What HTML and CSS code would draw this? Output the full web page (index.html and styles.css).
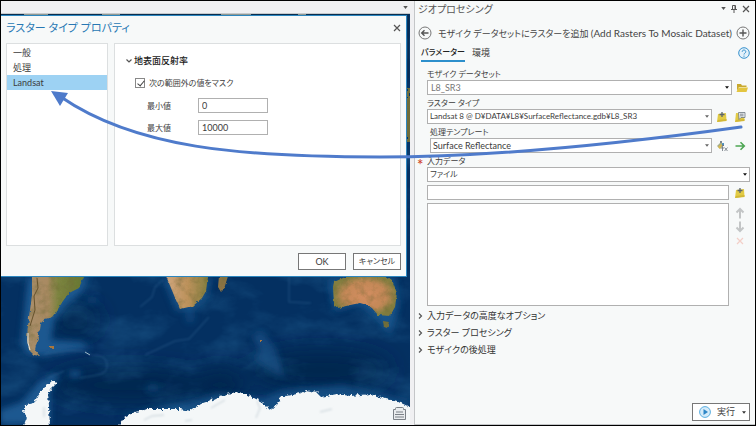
FILE: index.html
```html
<!DOCTYPE html>
<html lang="ja">
<head>
<meta charset="utf-8">
<title>ジオプロセシング</title>
<link rel="stylesheet" href="styles.css">
</head>
<body>
<div class="app">
  <main class="view">
    <div class="view-tabs">
      <svg class="caret" viewBox="0 0 6 4" aria-hidden="true"><path d="M0 0h6L3 4z"/></svg>
    </div>
    <div class="stage">
      <svg class="map" viewBox="1 14 409 411" preserveAspectRatio="xMidYMax slice" aria-hidden="true">
        <defs>
          <filter id="soft" x="-30%" y="-30%" width="160%" height="160%"><feGaussianBlur stdDeviation="3"/></filter>
          <filter id="line-soft" x="-10%" y="-10%" width="120%" height="120%"><feGaussianBlur stdDeviation=".8"/></filter>
          <filter id="haze" x="-40%" y="-40%" width="180%" height="180%"><feGaussianBlur stdDeviation="10"/></filter>
          <filter id="rough" x="-5%" y="-5%" width="110%" height="110%">
            <feTurbulence type="fractalNoise" baseFrequency="0.25" numOctaves="3" seed="4" result="n"/>
            <feDisplacementMap in="SourceGraphic" in2="n" scale="3" xChannelSelector="R" yChannelSelector="G" result="d"/>
            <feTurbulence type="fractalNoise" baseFrequency="0.12" numOctaves="4" seed="8"/>
            <feColorMatrix values="0 0 0 0 .16  0 0 0 0 .15  0 0 0 0 .04  1.2 0 0 0 -.5"  result="t"/>
            <feComposite in="t" in2="d" operator="in" result="s"/>
            <feMerge><feMergeNode in="d"/><feMergeNode in="s"/></feMerge>
          </filter>
          <filter id="ice" x="-5%" y="-20%" width="110%" height="140%">
            <feTurbulence type="fractalNoise" baseFrequency="0.3" numOctaves="3" seed="2" result="n"/>
            <feDisplacementMap in="SourceGraphic" in2="n" scale="5" xChannelSelector="R" yChannelSelector="G"/>
          </filter>
          <filter id="sea" x="0" y="0" width="100%" height="100%">
            <feTurbulence type="fractalNoise" baseFrequency="0.02 0.035" numOctaves="5" seed="11"/>
            <feColorMatrix values="0 0 0 0 .06  0 0 0 0 .32  0 0 0 0 .6  2 0 0 0 -.9"/>
          </filter>
          <linearGradient id="sa" x1="0" x2="1" y1="0" y2="0"><stop offset="0" stop-color="#a88e6a"/><stop offset=".35" stop-color="#a98a62"/><stop offset=".55" stop-color="#7c8440"/><stop offset="1" stop-color="#667632"/></linearGradient>
          <linearGradient id="af" x1="0" x2="1" y1="0" y2="0"><stop offset="0" stop-color="#cfa67e"/><stop offset=".5" stop-color="#bd925c"/><stop offset="1" stop-color="#847e40"/></linearGradient>
          <radialGradient id="au"><stop offset="0" stop-color="#d38e60"/><stop offset=".65" stop-color="#c48858"/><stop offset="1" stop-color="#837e40"/></radialGradient>
        </defs>
        <rect x="1" y="14" width="409" height="411" fill="#043061"/>
        <g fill="#02264f" filter="url(#haze)">
          <ellipse cx="75" cy="320" rx="25" ry="16"/><ellipse cx="130" cy="385" rx="80" ry="18"/>
          <ellipse cx="320" cy="370" rx="70" ry="20"/><ellipse cx="220" cy="385" rx="25" ry="18"/>
        </g>
        <rect x="1" y="14" width="409" height="411" filter="url(#sea)" opacity=".25"/>
        <g fill="#1a5890" filter="url(#soft)">
          <path d="M28 277h60l-7 16-15 12-12 16-3 19 30 2 10 6-48 8-16-2-6-12z"/>
          <path d="M0 424v-14l22-8 18-22 20-7-10 18v33z"/>
          <path d="M162 277h50l-4 20-16 14-16 0z" opacity=".7"/>
          <path d="M328 280l20-3h48l3 30-9 28-14-18-16-12-26 6z" opacity=".8"/>
          <path d="M118 416l70-14 30-9 45 5 20-8 60-5 66 16v15z" opacity=".7"/>
          <path d="M252 335l10-4 14 18 8 28-14-8-18-11 8-5z" opacity=".6"/>
          <ellipse cx="75" cy="374" rx="6" ry="3"/><ellipse cx="92" cy="300" rx="7" ry="2" opacity=".6"/>
          <ellipse cx="153" cy="388" rx="6" ry="4" opacity=".5"/><ellipse cx="190" cy="317" rx="5" ry="6" opacity=".5"/>
        </g>
        <g fill="none" stroke="#4b80ad" stroke-width="1.500" opacity=".28" filter="url(#line-soft)">
          <path d="M44 354q20-5 38-3l10 4q14 0 15 9t-9 11l-18 3M48 378l16-7M140 307l12-10 3-10 8-7M145 355l30-14 14-2 20-22M289 277v25l22 1"/>
        </g>
        <path d="M85 352l5 3" stroke="#9eb8c6" stroke-width="1"/>
        <g filter="url(#rough)">
          <path fill="url(#sa)" d="M32 276h52l-5 12-10 5-6 8-5 8-6 8-7 2-4 4-1 7-3 3 2 5-3 7-1 5 5 6-6-1-5-5-2-10 1-15 2-15 2-15z"/>
          <path fill="url(#af)" d="M166 276h42l-2 15-4 7-9 8-13 3-4-9-5-12z"/>
          <path fill="#8b7344" d="M219 276h9l-4 13-3 3-3-5z"/>
          <path fill="url(#au)" d="M333 287l1-5 9-4 8-3h34l7 5 5 13-2 14-5 9-12-1-6-7-5-3-7-2-10 2-12 3-4-3z"/>
          <path fill="#706d3a" d="M383 321l6 1-2 6-3-1zM407 88h3v54h-3z"/>
          <path fill="#ad7841" d="M49 346h4v2h-4zM260 340h2v2h-2z"/>
        </g>
        <path d="M37 278l1 10-4 8 1 14-5 16" fill="none" stroke="#66522c" stroke-width="1"/>
        <path d="M28 333v10l2 7" fill="none" stroke="#e4e2da" stroke-width="1"/>
        <g fill="#f4f7f8" filter="url(#ice)">
          <path d="M117 428l8-11 10-5 12-3h33l10 2 10-7 12-4 8-4 15-4 15 4 12 6 8 8 6-4 5-9 20-4 5-3 10 2 5 5 15-3 15 2 20-2 15 5 15 4 15 7v22z"/>
          <path d="M23 428l4-10-4-6 3-7 8-2 4-8 6-8 8-5h5l-7 7-2 6 1 11 1 22z"/>
        </g>
        <g fill="none" stroke="#c3ced5" stroke-width="1" filter="url(#line-soft)">
          <path d="M144 420l8-4 12-1M185 421l7-1M257 401l3 7-4 10M44 407v10M225 400l-14 8M320 412l12-3"/>
        </g>
        <path d="M1 14.500h406M408.500 14v64" stroke="#082d50"/>
        <path d="M24 14.500h24M102 14.500h18M221 14.500h30M298 14.500h8" stroke="#8d9792"/>
      </svg>

      <section class="dialog" aria-labelledby="dlg-title">
        <header class="dialog-head">
          <h1 id="dlg-title">ラスター タイプ プロパティ</h1>
          <button class="plain" type="button" aria-label="閉じる"><svg class="close" viewBox="0 0 8 8"><path d="M1 1l6 6M7 1L1 7"/></svg></button>
        </header>
        <div class="dialog-body">
          <nav class="pages">
            <a href="#general">一般</a>
            <a href="#process">処理</a>
            <a href="#landsat" class="current">Landsat</a>
          </nav>
          <div class="page">
            <h2><svg class="chev" viewBox="0 0 6 6" aria-hidden="true"><path d="M.5 1.500L3 4l2.500-2.500"/></svg>地表面反射率</h2>
            <label class="check"><input type="checkbox" checked><span>次の範囲外の値をマスク</span></label>
            <div class="pair"><label for="min">最小値</label><input id="min" type="text" value="0"></div>
            <div class="pair"><label for="max">最大値</label><input id="max" type="text" value="10000"></div>
          </div>
        </div>
        <footer class="dialog-foot">
          <button type="button">OK</button>
          <button type="button" class="kana">キャンセル</button>
        </footer>
      </section>
      <svg class="note" viewBox="0 0 15 13" aria-hidden="true"><path d="M3.500 1.500q0-1 1-1h6q1 0 1 1v1h2v10h-12v-10h2zM4 5h7M3 7.500h9M3 10h9"/></svg>
    </div>
  </main>

  <aside class="pane">
    <header class="pane-head">
      <h1>ジオプロセシング</h1>
      <button class="plain" type="button" aria-label="メニュー"><svg class="caret" viewBox="0 0 6 4"><path d="M0 0h6L3 4z"/></svg></button>
      <button class="plain" type="button" aria-label="固定"><svg class="pin" viewBox="0 0 6 8"><path d="M1.500 .5h3v4M1.500 .5v4M0 4.500h6M3 5v3M4 1v3"/></svg></button>
      <button class="plain" type="button" aria-label="閉じる"><svg class="close" viewBox="0 0 8 8"><path d="M1 1l6 6M7 1L1 7"/></svg></button>
    </header>
    <div class="tool-head">
      <button class="plain" type="button" aria-label="戻る"><svg class="round" viewBox="0 0 14 14"><circle cx="7" cy="7" r="6"/><path class="bold" d="M10.500 7H4M6.500 4.200L3.700 7l2.800 2.800"/></svg></button>
      <h2>モザイク データセットにラスターを追加 <span class="latin">(Add Rasters To Mosaic Dataset)</span></h2>
      <button class="plain" type="button" aria-label="追加"><svg class="round" viewBox="0 0 14 14"><circle cx="7" cy="7" r="6"/><path class="bold" d="M3.500 7h7M7 3.500v7"/></svg></button>
    </div>
    <nav class="tabs">
      <a href="#params" class="current">パラメーター</a>
      <a href="#env">環境</a>
      <button class="plain help" type="button" aria-label="ヘルプ"><svg viewBox="0 0 12 12"><circle cx="6" cy="6" r="5.300"/><path d="M4.200 4.800c0-2.400 3.600-2.300 3.600 0 0 1.300-1.800 1.300-1.800 2.700M6 8.600v1.200"/></svg></button>
    </nav>

    <form class="form">
      <label for="mosaic">モザイク データセット</label>
      <div class="row">
        <div class="combo dark"><select id="mosaic" class="muted"><option>L8_SR3</option></select><svg class="tri" viewBox="0 0 5 3" aria-hidden="true"><path d="M0 0h5L2.500 3z"/></svg></div>
        <button class="plain browse" type="button" aria-label="参照"><svg class="folder" viewBox="0 0 12 10"><path fill="#c9a92f" d="M1 1h4l1 1.500h4.500V4H3L1 8z"/><path fill="#e3c540" d="M2.500 4.500H12L10.500 9H.5z"/></svg></button>
      </div>
      <label for="rtype">ラスター タイプ</label>
      <div class="row">
        <div class="combo"><select id="rtype" class="small"><option>Landsat 8 @ D¥DATA¥L8¥SurfaceReflectance.gdb¥L8_SR3</option></select><svg class="tri" viewBox="0 0 5 3" aria-hidden="true"><path d="M0 0h5L2.500 3z"/></svg></div>
        <div class="icons">
          <button class="plain" type="button" aria-label="インポート"><svg class="icon" viewBox="0 0 12 12"><path fill="#e2cb45" d="M2 3l8-1 .5 7.500L1 11z"/><path fill="#d2b836" d="M1 11l1-2 8.500-1v2z"/><path stroke="#5a646e" stroke-width="1.300" d="M6 1v5M3.500 3.500h5"/></svg></button>
          <button class="plain" type="button" aria-label="プロパティ"><svg class="icon" viewBox="0 0 12 12"><path fill="#e2cb45" d="M2 2l8 .5.500 7L1 11z"/><path fill="#d2b836" d="M1 11l1-2 8.500-1v2z"/><path fill="#e9edf0" stroke="#6d7780" stroke-width=".8" d="M4.500 1.500h6.500v5H7L5 8.500z"/><path stroke="#6d7780" stroke-width=".8" d="M6 3.200h3.500M6 4.800h3.500"/></svg></button>
        </div>
      </div>
      <label class="nested" for="tmpl">処理テンプレート</label>
      <div class="row nested-row">
        <div class="combo"><select id="tmpl"><option>Surface Reflectance</option></select><svg class="tri" viewBox="0 0 5 3" aria-hidden="true"><path d="M0 0h5L2.500 3z"/></svg></div>
        <div class="icons">
          <button class="plain" type="button" aria-label="編集"><svg class="icon" viewBox="0 0 12 12"><path fill="#a3ac8a" d="M1 6l4-4 3 3-4 4z"/><path fill="#dbb94a" d="M2 7l3-3 1 1-2 4z"/><path fill="#7d8791" d="M4 1h2v2H4zM6 4l2-1v3H6z"/><circle cx="7" cy="4" r="1" fill="#3f8fc7"/><path fill="none" stroke="#69727b" stroke-width=".8" d="M8 5.500q-1.500-.5-1.500 1V11M5 8h3M8.500 7.500l3 3.500M11.500 7.500l-3 3.500"/></svg></button>
          <button class="plain" type="button" aria-label="実行先"><svg class="icon" viewBox="0 0 12 12"><path fill="none" stroke="#4da653" stroke-width="1.600" d="M1.500 6H10M6.500 2.200L10.300 6 6.500 9.800"/></svg></button>
        </div>
      </div>
      <label class="required" for="input">入力データ</label>
      <div class="row">
        <div class="combo dark"><select id="input" class="small"><option>ファイル</option></select><svg class="tri" viewBox="0 0 5 3" aria-hidden="true"><path d="M0 0h5L2.500 3z"/></svg></div>
      </div>
      <div class="row entry">
        <input class="path" type="text" aria-label="入力ファイル">
        <div class="icons"><button class="plain" type="button" aria-label="ファイル追加"><svg class="icon" viewBox="0 0 12 12"><path fill="#e2cb45" d="M2 3l8-1 .5 7.500L1 11z"/><path fill="#d2b836" d="M1 11l1-2 8.500-1v2z"/><path stroke="#5a646e" stroke-width="1.300" d="M6 1v5M3.500 3.500h5"/></svg></button></div>
      </div>
      <div class="row entry list">
        <textarea aria-label="入力リスト"></textarea>
        <div class="icons column">
          <button class="plain" type="button" aria-label="上へ"><svg class="icon grey" viewBox="0 0 12 12"><path d="M6 11.500V2M2.500 5.500L6 2l3.500 3.500"/></svg></button>
          <button class="plain" type="button" aria-label="下へ"><svg class="icon grey" viewBox="0 0 12 12"><path d="M6 .5V10M2.500 6.500L6 10l3.500-3.500"/></svg></button>
          <button class="plain" type="button" aria-label="削除"><svg class="icon pink" viewBox="0 0 12 12"><path d="M3 3l6 6M9 3L3 9"/></svg></button>
        </div>
      </div>
      <div class="groups">
        <button type="button"><svg class="chev" viewBox="0 0 6 6" aria-hidden="true"><path d="M2 .5L4.500 3 2 5.500"/></svg>入力データの高度なオプション</button>
        <button type="button"><svg class="chev" viewBox="0 0 6 6" aria-hidden="true"><path d="M2 .5L4.500 3 2 5.500"/></svg>ラスター プロセシング</button>
        <button type="button"><svg class="chev" viewBox="0 0 6 6" aria-hidden="true"><path d="M2 .5L4.500 3 2 5.500"/></svg>モザイクの後処理</button>
      </div>
    </form>
    <footer class="run-bar">
      <button class="run" type="button"><svg class="play" viewBox="0 0 12 12" aria-hidden="true"><circle cx="6" cy="6" r="5.400"/><path d="M4.500 3L9 6 4.500 9z"/></svg><span>実行</span><svg class="tri" viewBox="0 0 5 3" aria-hidden="true"><path d="M0 0h5L2.500 3z"/></svg></button>
    </footer>
  </aside>

  <svg class="callout" viewBox="0 0 756 426" preserveAspectRatio="none" aria-hidden="true">
    <path class="line" d="M741 127C640 141 500 157 380 157 240 157 135 148 61 97"/>
    <path class="head" d="M51 91l17 2-8 13z"/>
  </svg>
</div>
</body>
</html>
```

FILE: styles.css
```css
* { box-sizing: border-box; }

body {
  margin: 0;
  color: #3c3c3c;
  font-family: Lato, "Noto Sans CJK JP", sans-serif;
  font-size: 9px;
  line-height: 12px;
  font-feature-settings: "palt";
}

h1, h2 { margin: 0; font-size: 9px; font-weight: 400; }
a { color: inherit; text-decoration: none; }
button, input, select, textarea { font: inherit; font-feature-settings: inherit; color: inherit; margin: 0; }
svg { display: block; flex: none; }

.plain { display: flex; padding: 0; border: 0; background: none; }

.app {
  position: relative;
  display: grid;
  grid-template-columns: minmax(0, 413fr) minmax(0, 341fr);
  min-height: 100vh;
  border: 1px solid #000;
  background: #f0f0f2;
}

/* Map view */
.view { display: flex; flex-direction: column; min-width: 0; padding-right: 4px; }
.view-tabs { display: flex; justify-content: flex-end; align-items: center; height: 13px; padding-right: 2px; border-bottom: 1px solid #c8cacc; }
.caret { width: 5px; height: 3px; fill: #555; }
.close { width: 8px; height: 8px; fill: none; stroke: #555; stroke-width: 1.2; }
.pin { width: 6px; height: 8px; fill: none; stroke: #555; }

.stage { position: relative; flex: 1; min-height: 0; padding: 1px 3px 0 0; overflow: hidden; }
.map { position: absolute; inset: 0; width: 100%; height: 100%; }
.note { position: absolute; right: 3px; bottom: 5px; width: 15px; height: 13px; fill: #e9ecee; stroke: #7b8187; }

.dialog {
  position: relative;
  display: flex;
  flex-direction: column;
  background: #f7f9f9;
  border: solid #2c86bf;
  border-width: 1px 1px 1px 0;
}
.dialog-head { display: flex; justify-content: space-between; align-items: center; height: 27px; padding: 0 5px 4px; }
.dialog-head h1 { color: #2878b4; font-size: 11px; line-height: 16px; }
.dialog-body { display: grid; grid-template-columns: 102fr 287fr; gap: 6px; height: 203px; padding: 0 5px; }
.pages, .page { min-width: 0; background: #fff; border: 1px solid #dcdfe0; }
.pages { padding-top: 1px; }
.pages a { display: block; padding-left: 6px; line-height: 15px; height: 15px; }
.pages .current { background: #9dd2f3; }
.page { padding: 9px 11px; }
.page h2 { display: flex; align-items: center; gap: 2px; line-height: 16px; font-weight: 500; color: #222; }
.chev { width: 6px; height: 6px; fill: none; stroke: #555; stroke-width: 1.2; }
.check { display: flex; align-items: center; gap: 4px; margin: 8px 0 0 9px; font-size: 8px; }
.check input {
  appearance: none;
  position: relative;
  width: 10px;
  height: 10px;
  border: 1px solid #888;
  background: #fff;
}
.check input:checked::after {
  content: "";
  position: absolute;
  left: 3px;
  top: 0;
  width: 3px;
  height: 6px;
  border: solid #444;
  border-width: 0 1px 1px 0;
  transform: rotate(40deg);
}
.pair { display: flex; align-items: center; margin: 7px 0 0 21px; }
.check + .pair { margin-top: 9px; }
.pair label { width: 51px; font-size: 8px; }
.pair input { width: 70px; height: 15px; padding: 0 3px; border: 1px solid #b0b0b0; background: #fff; }
.dialog-foot { display: flex; justify-content: flex-end; gap: 7px; padding: 7px 5px 6px; }
.dialog-foot button { width: 48px; height: 17px; padding: 0; border: 1px solid #777; background: #fff; line-height: 15px; }
.dialog-foot .kana { font-size: 8px; }

/* Geoprocessing pane */
.pane { display: flex; flex-direction: column; min-width: 0; padding: 0 5px 0 3px; border-left: 1px solid #c4c6c8; border-bottom: 1px solid #c4c6c8; background: #f7f9f9; }
.pane-head { display: flex; align-items: center; gap: 5px; height: 15px; }
.pane-head h1 { flex: 1; font-size: 10px; line-height: 14px; color: #555; }
.tool-head { display: flex; align-items: center; gap: 6px; height: 22px; margin-top: 6px; }
.tool-head h2 { flex: 1; min-width: 0; line-height: 16px; white-space: nowrap; color: #444; }
.latin { font-size: 10px; }
.round { width: 14px; height: 14px; fill: none; stroke: #777; }
.round .bold { stroke: #555; stroke-width: 1.4; }
.tabs { display: flex; align-items: center; gap: 7px; height: 18px; padding-left: 3px; line-height: 15px; }
.tabs a { border-bottom: 2px solid transparent; }
.tabs .current { border-color: #2c8fcc; color: #222; font-size: 8px; font-weight: 500; }
.help { margin-left: auto; }
.help svg { width: 12px; height: 12px; fill: #e3f1fa; stroke: #3792cd; }

.form { display: flex; flex-direction: column; padding-left: 9px; margin-top: 6px; }
.form > label { margin-top: 2px; font-size: 8px; }
.form > label:first-child { margin-top: 0; }
.nested { padding-left: 3px; }
.nested-row { margin-left: 3px; }
.required { position: relative; }
.required::before { content: "*"; position: absolute; left: -10px; top: 3px; color: #d0462b; font-size: 15px; font-weight: 600; }
.row { display: flex; align-items: center; }
.combo { position: relative; flex: 1; min-width: 0; }
.combo select { appearance: none; display: block; width: 100%; height: 15px; padding: 0 12px 0 2px; border: 1px solid #b0b0b0; border-radius: 0; background: #fff; line-height: 13px; }
.combo .small { font-size: 8px; }
.combo .muted { padding-left: 3px; color: #777; }
.combo .tri { position: absolute; right: 3px; top: 6px; }
.tri { width: 4px; height: 3px; fill: #666; }
.dark .tri { fill: #111; }
.browse { width: 18px; justify-content: center; padding-left: 2px; }
.folder { width: 12px; height: 10px; }
.icons { display: flex; gap: 6px; padding: 0 4px; }
.icon { width: 12px; height: 12px; }
.entry { margin-top: 3px; }
.entry .icons { padding-left: 5px; }
.path { flex: 1; min-width: 0; height: 15px; border: 1px solid #b0b0b0; background: #fff; }
.list { align-items: flex-start; }
.list textarea { flex: 1; min-width: 0; height: 103px; border: 1px solid #b0b0b0; background: #fff; resize: none; }
.column { flex-direction: column; gap: 2px; padding-top: 4px; }
.grey { fill: none; stroke: #c3c5c6; stroke-width: 2; }
.pink { fill: none; stroke: #f3cfc8; stroke-width: 1.2; }
.groups { margin: 1px 0 0 -10px; }
.groups button { display: flex; align-items: center; gap: 4px; width: 100%; height: 17px; padding: 0; border: 0; background: none; color: #333; }

.run-bar { display: flex; justify-content: flex-end; margin-top: auto; padding-bottom: 3px; }
.run { display: flex; align-items: center; gap: 6px; width: 58px; height: 18px; padding: 0 3px 0 6px; border: 1px solid #777; background: #fff; }
.run .tri { margin-left: auto; fill: #333; }
.play { width: 12px; height: 12px; fill: #d5ebf9; stroke: #58aee0; }
.play path { fill: #2e86c6; stroke: none; }

/* Arrow linking the properties button to the dialog page */
.callout { position: absolute; inset: -1px; width: calc(100% + 2px); height: calc(100% + 2px); pointer-events: none; }
.line { fill: none; stroke: #4f7bcb; stroke-width: 3; stroke-linecap: round; }
.head { fill: #4f7bcb; }
```
